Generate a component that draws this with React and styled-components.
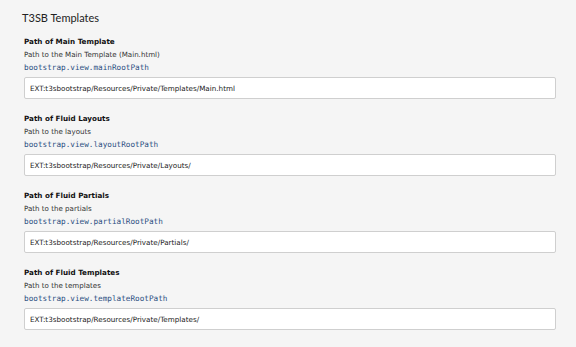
import React from 'react'
import styled, { createGlobalStyle } from 'styled-components'

const GlobalStyle = createGlobalStyle`
  html, body {
    margin: 0;
    padding: 0;
    background: #f5f5f5;
  }
  body {
    font-family: "DejaVu Sans", Verdana, sans-serif;
    color: #333;
  }
`

const Page = styled.div`
  width: 576px;
  height: 347px;
  padding: 10px 20px 0 24px;
  box-sizing: border-box;
  overflow: hidden;
`
const Title = styled.h1`
  margin: 0 0 8px -2px;
  font-family: Lato, "Open Sans", sans-serif;
  font-size: 11px;
  font-weight: normal;
  color: #222;
  line-height: 16px;
`
const Sections = styled.div`
  display: flex;
  flex-direction: column;
  gap: 12px;
`
const Section = styled.div`
  display: flex;
  flex-direction: column;
`
const Label = styled.div`
  margin-top: 1px;
  font-size: 7.2px;
  font-weight: bold;
  color: #111;
  line-height: 13px;
`
const Desc = styled.div`
  font-size: 7.1px;
  color: #333;
  line-height: 13px;
`
const Code = styled.code`
  font-family: "DejaVu Sans Mono", monospace;
  font-size: 7.7px;
  color: #2c4f82;
  line-height: 13px;
`
const Input = styled.input`
  margin-top: 3px;
  width: 532px;
  height: 22px;
  box-sizing: border-box;
  padding: 0 5px;
  border: 1px solid #cfcfcf;
  border-radius: 2px;
  background: #fff;
  font-family: "DejaVu Sans", Verdana, sans-serif;
  font-size: 7.2px;
  color: #222;
  outline: none;
`

const fields = [
  {
    label: 'Path of Main Template',
    desc: 'Path to the Main Template (Main.html)',
    key: 'bootstrap.view.mainRootPath',
    value: 'EXT:t3sbootstrap/Resources/Private/Templates/Main.html',
  },
  {
    label: 'Path of Fluid Layouts',
    desc: 'Path to the layouts',
    key: 'bootstrap.view.layoutRootPath',
    value: 'EXT:t3sbootstrap/Resources/Private/Layouts/',
  },
  {
    label: 'Path of Fluid Partials',
    desc: 'Path to the partials',
    key: 'bootstrap.view.partialRootPath',
    value: 'EXT:t3sbootstrap/Resources/Private/Partials/',
  },
  {
    label: 'Path of Fluid Templates',
    desc: 'Path to the templates',
    key: 'bootstrap.view.templateRootPath',
    value: 'EXT:t3sbootstrap/Resources/Private/Templates/',
  },
]

const App = () => {
  return (
    <Page>
      <GlobalStyle />
      <Title>T3SB Templates</Title>
      <Sections>
        {fields.map(f => (
          <Section key={f.key}>
            <Label>{f.label}</Label>
            <Desc>{f.desc}</Desc>
            <Code>{f.key}</Code>
            <Input type="text" defaultValue={f.value} />
          </Section>
        ))}
      </Sections>
    </Page>
  )
}

export default App
